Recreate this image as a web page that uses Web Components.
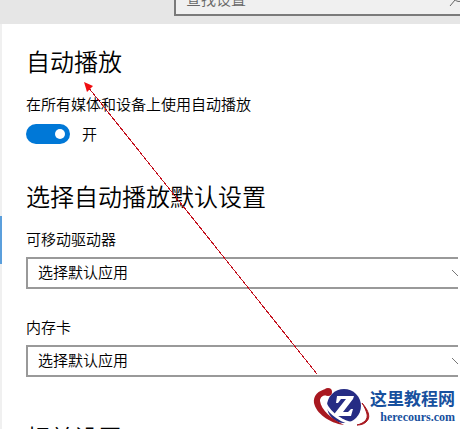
<!DOCTYPE html>
<html lang="zh-CN">
<head>
<meta charset="utf-8">
<title>自动播放</title>
<style>
html,body{height:100%;margin:0}
body{overflow:hidden;background:#fff;color:#000;font-family:"Noto Sans CJK SC",sans-serif;font-size:15px;line-height:20px}
</style>
</head>
<body>
<settings-page>
  <settings-search slot="header" placeholder="查找设置"></settings-search>
  <settings-section heading="自动播放" level="1">
    <toggle-switch label="在所有媒体和设备上使用自动播放" state="开"></toggle-switch>
  </settings-section>
  <settings-section heading="选择自动播放默认设置">
    <select-field label="可移动驱动器" value="选择默认应用"></select-field>
    <select-field label="内存卡" value="选择默认应用"></select-field>
  </settings-section>
  <settings-section heading="相关设置"></settings-section>
  <pointer-arrow slot="overlay"></pointer-arrow>
  <site-mark slot="overlay"></site-mark>
</settings-page>
<script>
class Base extends HTMLElement{
  connectedCallback(){
    if(this.shadowRoot)return;
    this.attachShadow({mode:'open'}).innerHTML=this.render();
  }
  a(n){return this.getAttribute(n)||''}
}
customElements.define('settings-page',class extends Base{render(){return `
<style>
:host{display:flex;flex-direction:column;height:100%;position:relative;overflow:hidden}
header{flex:none;display:flex;align-items:flex-end;height:24px;box-sizing:border-box;padding:0 0 8px 174px;background:#e6e6e6}
.body{flex:1;min-height:0;display:flex}
.rail{flex:none;width:2px;background:#f0f0f0;padding-top:192px;box-sizing:border-box}
.rail i{display:block;height:48px;background:#5b9fdc}
main{flex:1;min-width:0;display:flex;flex-direction:column;gap:36px;padding:21px 2px 0 24px}
::slotted(settings-section:last-of-type){margin-top:8px}
</style>
<header><slot name="header"></slot></header>
<div class="body"><div class="rail"><i></i></div><main><slot></slot></main></div>
<slot name="overlay"></slot>`}});
customElements.define('settings-search',class extends Base{render(){return `
<style>
:host{flex:1;display:flex;align-items:center;box-sizing:border-box;height:32px;border:2px solid #7a7a7a;border-right:0;background:#f0f0f0;padding-left:10px}
input{flex:1;min-width:0;border:0;padding:0 0 2px;background:none;font:inherit;font-weight:350;color:#666;outline:0}
input::placeholder{color:#666;opacity:1}
svg{flex:none;width:12px;height:20px;overflow:hidden}
</style>
<input type="search" aria-label="${this.a('placeholder')}" placeholder="${this.a('placeholder')}">
<svg viewBox="0 0 12 20" fill="none" stroke="#666"><circle cx="11" cy="6" r="5.5"/><path d="M7 10L2 16"/></svg>`}});
customElements.define('settings-section',class extends Base{render(){const t=this.a('level')?'h1':'h2';return `
<style>
:host{display:flex;flex-direction:column;gap:17px}
h1,h2{margin:0;font-size:24px;line-height:32px;font-weight:350;white-space:nowrap}
.items{display:flex;flex-direction:column;gap:28px}
</style>
<${t}>${this.a('heading')}</${t}><div class="items"><slot></slot></div>`}});
customElements.define('toggle-switch',class extends Base{render(){return `
<style>
:host{display:flex;flex-direction:column;gap:10px;font-weight:350}
.row{display:flex;align-items:center;gap:12px;height:20px}
input{appearance:none;margin:0;box-sizing:border-box;width:44px;height:20px;border-radius:10px;background:#0078d7;padding:5px;display:flex;justify-content:flex-end}
input::before{content:"";width:10px;height:10px;border-radius:50%;background:#fff}
input:not(:checked){background:#999;justify-content:flex-start}
</style>
<label for="t">${this.a('label')}</label>
<div class="row"><input id="t" type="checkbox" role="switch" checked><span>${this.a('state')}</span></div>`}});
customElements.define('select-field',class extends Base{render(){return `
<style>
:host{display:flex;flex-direction:column;gap:8px;font-weight:350}
.box{display:flex;align-items:center;box-sizing:border-box;height:32px;border:2px solid #999;border-right:0}
select{appearance:none;flex:1;min-width:0;height:28px;border:0;margin:0;padding:0 0 2px 10px;background:none;color:inherit;font:inherit;outline:0}
svg{flex:none;width:6px;height:6px}
</style>
<label for="s">${this.a('label')}</label>
<div class="box"><select id="s"><option>${this.a('value')}</option></select>
<svg viewBox="0 0 6 6" fill="none" stroke="#777"><path d="M0 0L6 6"/></svg></div>`}});
customElements.define('pointer-arrow',class extends Base{render(){return `
<style>
:host{position:absolute;left:84px;top:82px;pointer-events:none}
svg{display:block;width:234px;height:293px}
</style>
<svg viewBox="0 0 234 293"><path d="M4 5L233 292" stroke="#c4121f" fill="none" shape-rendering="crispEdges"/><path d="M0 0L9 4L3 10Z" fill="#f00d10"/></svg>`}});
customElements.define('site-mark',class extends Base{render(){return `
<style>
:host{position:absolute;right:5px;bottom:0;display:flex;align-items:flex-start;color:#17509e}
svg{width:60px;height:45px}
.t{display:flex;flex-direction:column;align-items:flex-end;gap:2px;padding-top:4px}
b{font-size:17px;line-height:20px;font-weight:700}
a{font:700 12px/14px "Liberation Serif",serif;color:inherit;text-decoration:none}
</style>
<svg viewBox="0 0 60 45">
<circle cx="34" cy="22" r="17" fill="#262c84"/>
<path d="M15 10C11 17 19 29 32 36C38 39 44 40 48 39" stroke="#fff" stroke-width="3" fill="none"/>
<path d="M27 12H44L43 15L33 28H38L41 25H43L41 32H24L25 29L36 15H31L28 19H26Z" fill="#fff"/>
<path d="M17 5C8 6 3 12 4 19C6 29 19 39 34 41C22 35 11 26 10 17C10 13 13 11 18 11Z" fill="#a81820"/>
<circle cx="18" cy="8" r="4" fill="#a81820"/>
<path d="M52 19C59 27 61 34 56 38C54 40 51 41 47 41C55 39 58 35 57 30C56 26 54 22 52 19Z" fill="#a81820" stroke="#a81820"/>
</svg>
<div class="t"><b>这里教程网</b><a href="#">herecours.com</a></div>`}});
</script>
</body>
</html>
